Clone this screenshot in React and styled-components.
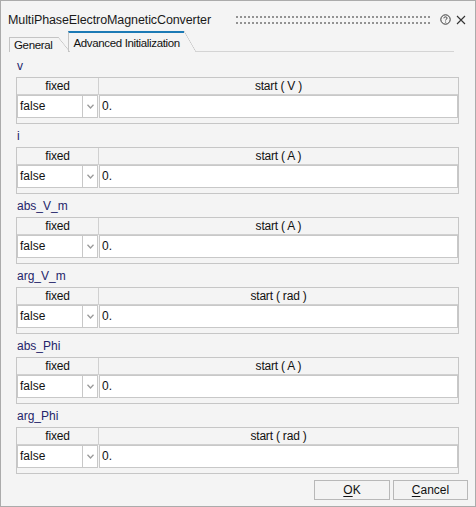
import React from "react";
import styled, { createGlobalStyle } from "styled-components";

const GlobalStyle = createGlobalStyle`
	html, body {
		margin: 0;
		padding: 0;
		background: #f4f4f4;
	}
	* {
		box-sizing: border-box;
	}
`;

const Window = styled.div`
	width: 476px;
	height: 507px;
	border: 1px solid #ababab;
	background: #f4f4f4;
	display: flex;
	flex-direction: column;
	font-family: "Liberation Sans", Arial, sans-serif;
	font-size: 12px;
	color: #000;
`;

const TitleBar = styled.div`
	height: 30px;
	padding: 8px 0 0 7px;
	display: flex;
	align-items: center;
`;

const Title = styled.div`
	font-size: 12.5px;
	letter-spacing: -0.1px;
	color: #1a1a1a;
	white-space: nowrap;
`;

const Grip = styled.div`
	flex: 1;
	height: 10px;
	margin: 0 7px 0 24px;
	background-image: radial-gradient(circle, #929292 0.9px, transparent 1.2px);
	background-size: 4px 6px;
	background-position: 0 -1px;
`;

const IconButton = styled.div`
	width: 14px;
	height: 14px;
	display: flex;
	align-items: center;
	justify-content: center;
	margin-right: ${(p) => p.$gap || 0}px;
`;

const TabBar = styled.div`
	height: 21px;
	margin-left: 8px;
	display: flex;
	align-items: flex-end;
	font-size: 11.5px;
	letter-spacing: -0.35px;
`;

const Tab = styled.div`
	position: relative;
	height: ${(p) => (p.$active ? 21 : 15)}px;
	padding: ${(p) => (p.$active ? "2px 4px 0 4px" : "0 6px 0 4px")};
	margin-right: ${(p) => (p.$active ? 12 : 10)}px;
	border-left: 1px solid #c4c4c4;
	border-top: ${(p) => (p.$active ? "2px solid #1c7ab5" : "1px solid #c4c4c4")};
	line-height: ${(p) => (p.$active ? 16 : 14)}px;
	color: #111;
	white-space: nowrap;

	&::after {
		content: "";
		position: absolute;
		top: ${(p) => (p.$active ? -2 : -1)}px;
		right: -12px;
		width: 12px;
		height: calc(100% + ${(p) => (p.$active ? 2 : 1)}px);
		background: linear-gradient(
			to top right,
			transparent calc(50% - 0.6px),
			#c4c4c4 50%,
			transparent calc(50% + 0.6px)
		);
	}
`;

const TabRule = styled.div`
	flex: 1;
	margin-right: 21px;
	border-bottom: 1px solid #d4d4d4;
`;

const Content = styled.div`
	flex: 1;
	padding: 3px 16px 0 15px;
	display: flex;
	flex-direction: column;
`;

const Section = styled.div`
	margin-bottom: 1px;
`;

const Label = styled.div`
	height: 22px;
	line-height: 22px;
	color: #24246a;
	padding-left: 1px;
`;

const Table = styled.div`
	height: 47px;
	border: 1px solid #c6c6c6;
	display: flex;
	flex-direction: column;
`;

const HeaderRow = styled.div`
	height: 17px;
	display: grid;
	grid-template-columns: 82px 1fr;
	border-bottom: 1px solid #d0d0d0;
`;

const HeaderCell = styled.div`
	text-align: center;
	line-height: 16px;
	color: #111;
	letter-spacing: -0.2px;
	border-right: ${(p) => (p.$divider ? "1px solid #d0d0d0" : "none")};
`;

const DataRow = styled.div`
	height: 23px;
	display: grid;
	grid-template-columns: 66px 15px 360px;
`;

const Field = styled.div`
	background: #fff;
	border: 1px solid #c8c8c8;
	line-height: 21px;
	padding-left: ${(p) => p.$pad || 2}px;
	margin-left: ${(p) => p.$offset || 0}px;
	color: #111;
	overflow: hidden;
`;

const ArrowBox = styled.div`
	background: #fff;
	border: 1px solid #c8c8c8;
	border-left: none;
	display: flex;
	align-items: center;
	justify-content: center;
`;

const Footer = styled.div`
	height: 32px;
	padding: 5px 7px 0 0;
	display: flex;
	justify-content: flex-end;
	gap: 3px;
`;

const Button = styled.div`
	width: ${(p) => p.$w}px;
	height: 20px;
	border: 1px solid #b8b8b8;
	background: #f3f3f3;
	text-align: center;
	line-height: 18px;
	color: #111;

	u {
		text-decoration: underline;
		text-underline-offset: 2px;
	}
`;

const Chevron = () => (
	<svg width="7" height="5" viewBox="0 0 7 5">
		<path d="M0.5 0.8 L3.5 4 L6.5 0.8" fill="none" stroke="#9a9a9a" strokeWidth="1.3" />
	</svg>
);

const HelpIcon = () => (
	<svg width="11" height="11" viewBox="0 0 11 11">
		<circle cx="5.5" cy="5.5" r="4.7" fill="none" stroke="#333" strokeWidth="1" />
		<path
			d="M3.9 4.3 C3.9 3.3 4.6 2.9 5.5 2.9 C6.4 2.9 7.1 3.4 7.1 4.2 C7.1 5.1 5.6 5.2 5.6 6.4"
			fill="none"
			stroke="#333"
			strokeWidth="1"
		/>
		<circle cx="5.6" cy="8" r="0.6" fill="#333" />
	</svg>
);

const CloseIcon = () => (
	<svg width="10" height="10" viewBox="0 0 10 10">
		<path d="M1 1 L9 9 M9 1 L1 9" stroke="#333" strokeWidth="1.1" />
	</svg>
);

const sections = [
	{ name: "v", unit: "V" },
	{ name: "i", unit: "A" },
	{ name: "abs_V_m", unit: "A" },
	{ name: "arg_V_m", unit: "rad" },
	{ name: "abs_Phi", unit: "A" },
	{ name: "arg_Phi", unit: "rad" },
];

const InitTable = ({ name, unit }) => {
	return (
		<Section>
			<Label>{name}</Label>
			<Table>
				<HeaderRow>
					<HeaderCell $divider>fixed</HeaderCell>
					<HeaderCell>start ( {unit} )</HeaderCell>
				</HeaderRow>
				<DataRow>
					<Field>false</Field>
					<ArrowBox>
						<Chevron />
					</ArrowBox>
					<Field $offset={1} $pad={2}>
						0.
					</Field>
				</DataRow>
			</Table>
		</Section>
	);
};

const App = () => {
	return (
		<>
			<GlobalStyle />
			<Window>
				<TitleBar>
					<Title>MultiPhaseElectroMagneticConverter</Title>
					<Grip />
					<IconButton $gap={2}>
						<HelpIcon />
					</IconButton>
					<IconButton $gap={7}>
						<CloseIcon />
					</IconButton>
				</TitleBar>
				<TabBar>
					<Tab>General</Tab>
					<Tab $active>Advanced Initialization</Tab>
					<TabRule />
				</TabBar>
				<Content>
					{sections.map((s) => (
						<InitTable key={s.name} name={s.name} unit={s.unit} />
					))}
				</Content>
				<Footer>
					<Button $w={76}>
						<u>O</u>K
					</Button>
					<Button $w={75}>
						<u>C</u>ancel
					</Button>
				</Footer>
			</Window>
		</>
	);
};

export default App;
